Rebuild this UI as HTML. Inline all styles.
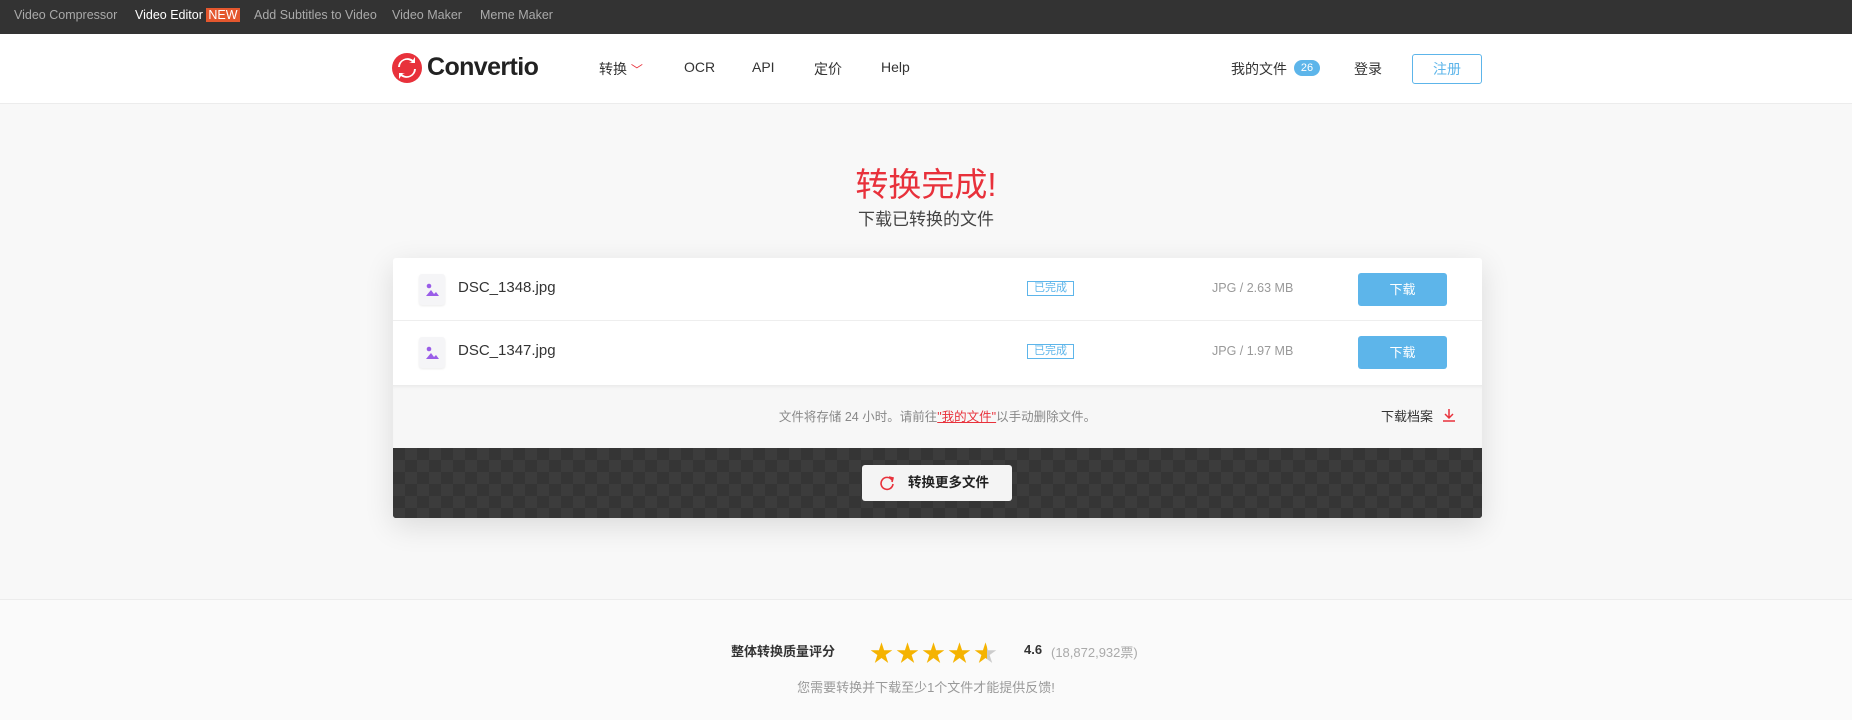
<!DOCTYPE html>
<html><head><meta charset="utf-8"><style>
*{margin:0;padding:0;box-sizing:border-box}
body{width:1852px;height:720px;overflow:hidden;background:#f8f8f8;font-family:"Liberation Sans","Noto Sans CJK SC",sans-serif;color:#333;position:relative}
.abs{position:absolute}
.top{left:0;top:0;width:1852px;height:34px;background:#333}
.top span{position:absolute;top:8px;font-size:12.5px;color:#aaa}
.hdr{left:0;top:34px;width:1852px;height:70px;background:#fff;border-bottom:1px solid #ececec}
.nav{font-size:14px;color:#333;top:59px}
.card{left:393px;top:258px;width:1089px;height:260px;box-shadow:0 8px 30px rgba(0,0,0,.12);border-radius:3px;overflow:hidden}
.row{position:absolute;left:0;width:1089px;height:63px;background:#fff}
.ico{position:absolute;left:26px;top:16px;width:26px;height:31px;background:#f5f5f7;border-radius:3px;box-shadow:0 1px 2px rgba(0,0,0,.08)}
.name{position:absolute;left:65px;top:21px;font-size:15px;color:#333}
.badge{position:absolute;left:634px;top:23px;width:47px;height:15px;border:1px solid #5db5ea;color:#5db5ea;font-size:11px;line-height:13px;text-align:center}
.size{position:absolute;left:819px;top:23px;font-size:12.5px;color:#999}
.dl{position:absolute;left:965px;top:15px;width:89px;height:33px;background:#5db5ea;color:#fff;border-radius:3px;font-size:13px;text-align:center;line-height:33px}
.dark{position:absolute;left:0;top:190px;width:1089px;height:70px;background-color:#353535;background-image:linear-gradient(45deg,#3c3c3c 25%,transparent 25%,transparent 75%,#3c3c3c 75%),linear-gradient(45deg,#3c3c3c 25%,transparent 25%,transparent 75%,#3c3c3c 75%);background-size:24px 24px;background-position:0 0,12px 12px}
</style></head><body>
<div class="abs top">
<span style="left:14px">Video Compressor</span>
<span style="left:135px;color:#fff">Video Editor <b style="background:#e4572e;color:#fff;font-weight:normal;padding:0 2px">NEW</b></span>
<span style="left:254px">Add Subtitles to Video</span>
<span style="left:392px">Video Maker</span>
<span style="left:480px">Meme Maker</span>
</div>
<div class="abs hdr"></div>
<svg class="abs" style="left:392px;top:53px" width="30" height="30" viewBox="0 0 30 30"><circle cx="15" cy="15" r="15" fill="#e8313b"/><path d="M8 14a7 7 0 0 1 12-5l-3 1h6v-6l-2 3a9.5 9.5 0 0 0-15 7zM22 16a7 7 0 0 1-12 5l3-1H7v6l2-3a9.5 9.5 0 0 0 15-7z" fill="#fff"/></svg>
<div class="abs" style="left:427px;top:53px;font-size:25px;font-weight:bold;color:#222;letter-spacing:-0.6px">Convertio</div>
<div class="abs nav" style="left:599px">转换 <span style="color:#e8313b;font-size:12px">﹀</span></div>
<div class="abs nav" style="left:684px">OCR</div>
<div class="abs nav" style="left:752px">API</div>
<div class="abs nav" style="left:814px">定价</div>
<div class="abs nav" style="left:881px">Help</div>
<div class="abs nav" style="left:1231px">我的文件</div>
<div class="abs" style="left:1294px;top:60px;width:26px;height:16px;border-radius:8px;background:#5db5ea;color:#fff;font-size:11px;text-align:center;line-height:16px">26</div>
<div class="abs nav" style="left:1354px">登录</div>
<div class="abs" style="left:1412px;top:54px;width:70px;height:30px;border:1px solid #5db5ea;border-radius:3px;color:#5db5ea;font-size:14px;text-align:center;line-height:28px">注册</div>

<div class="abs" style="left:0;width:1852px;top:158px;text-align:center;font-size:33px;color:#e8313b">转换完成!</div>
<div class="abs" style="left:0;width:1852px;top:205px;text-align:center;font-size:17px;color:#444">下载已转换的文件</div>

<div class="abs card">
<div class="row" style="top:0;border-bottom:1px solid #eee"><div class="ico"><svg width="26" height="31"><circle cx="10" cy="12" r="2.3" fill="#9a5de8"/><path d="M7 22l5-6 3 4 2-2 3 4z" fill="#9a5de8"/></svg></div><div class="name">DSC_1348.jpg</div><div class="badge">已完成</div><div class="size">JPG / 2.63 MB</div><div class="dl">下载</div></div>
<div class="row" style="top:63px;height:64px"><div class="ico"><svg width="26" height="31"><circle cx="10" cy="12" r="2.3" fill="#9a5de8"/><path d="M7 22l5-6 3 4 2-2 3 4z" fill="#9a5de8"/></svg></div><div class="name">DSC_1347.jpg</div><div class="badge">已完成</div><div class="size">JPG / 1.97 MB</div><div class="dl">下载</div></div>
<div style="position:absolute;left:0;top:127px;width:1089px;height:63px;background:#f7f7f7;box-shadow:inset 0 4px 4px -3px rgba(0,0,0,.08)">
<div style="position:absolute;left:0;width:1089px;top:21px;text-align:center;font-size:12.5px;color:#888">文件将存储 24 小时。请前往<span style="color:#e8313b;text-decoration:underline">"我的文件"</span>以手动删除文件。</div>
<div style="position:absolute;left:988px;top:21px;font-size:13px;color:#333">下载档案</div>
<svg style="position:absolute;left:1049px;top:23px" width="14" height="14"><path d="M7 1v9M3 6l4 4 4-4M1 13h12" stroke="#e8313b" stroke-width="1.5" fill="none"/></svg>
</div>
<div class="dark"><div style="position:absolute;left:469px;top:17px;width:150px;height:36px;background:#f4f4f4;border-radius:3px;font-size:13.5px;font-weight:bold;color:#222;line-height:36px;padding-left:46px">转换更多文件</div>
<svg style="position:absolute;left:486px;top:27px" width="16" height="16"><path d="M13 5A6 6 0 1 0 14 9" stroke="#e8313b" stroke-width="1.6" fill="none"/><path d="M10 2l4 1-1 4" stroke="#e8313b" stroke-width="1.6" fill="none"/></svg></div>
</div>

<div class="abs" style="left:0;top:599px;width:1852px;height:121px;background:#fafafa;border-top:1px solid #ececec"></div>
<div class="abs" style="left:731px;top:641px;font-size:13px;font-weight:bold;color:#333">整体转换质量评分</div>
<div class="abs" style="left:870px;top:634px;font-size:23px;color:#f5b301;letter-spacing:3px">★★★★<span style="background:linear-gradient(90deg,#f5b301 50%,#ccc 50%);-webkit-background-clip:text;color:transparent">★</span></div>
<div class="abs" style="left:1024px;top:642px;font-size:13px;font-weight:bold;color:#333">4.6</div>
<div class="abs" style="left:1051px;top:642px;font-size:13px;color:#aaa">(18,872,932票)</div>
<div class="abs" style="left:0;width:1852px;top:677px;text-align:center;font-size:13px;color:#999">您需要转换并下载至少1个文件才能提供反馈!</div>
</body></html>
